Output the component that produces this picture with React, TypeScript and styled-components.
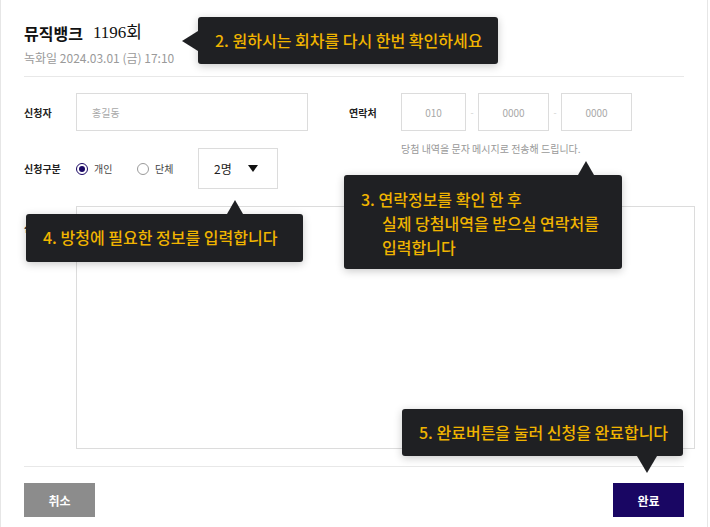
import styled, { createGlobalStyle, css } from "styled-components";

const GlobalStyle = createGlobalStyle`
  body {
    margin: 0;
    background: #fff;
    font-family: "Noto Sans CJK KR", "Noto Sans", sans-serif;
    color: #222;
  }
`;

const Modal = styled.div`
  position: relative;
  width: 708px;
  height: 527px;
  box-sizing: border-box;
  padding: 20px 23px 0;
  border-left: 1px solid #e6e6e6;
  border-right: 1px solid #e6e6e6;
  background: #fff;
`;

const Header = styled.div`
  padding-bottom: 9px;
  border-bottom: 1px solid #e8e8e8;
`;

const Title = styled.h1`
  margin: 0;
  display: flex;
  gap: 10px;
  font-size: 16px;
  line-height: 26px;
  font-weight: 700;
  color: #111;
`;

const Round = styled.span`
  font-family: "Liberation Serif", "Noto Sans CJK KR", serif;
  font-size: 17px;
  font-weight: 400;
`;

const SubTitle = styled.p`
  margin: 3px 0 0;
  font-size: 12px;
  line-height: 18px;
  color: #9a9a9a;
`;

const Form = styled.div`
  padding-top: 16px;
`;

const Columns = styled.div`
  display: grid;
  grid-template-columns: 325px 1fr;
`;

const Column = styled.div`
  display: flex;
  flex-direction: column;
  gap: 17px;
`;

const Field = styled.div<{ $h: number }>`
  display: flex;
  align-items: center;
  height: ${({ $h }) => $h}px;
`;

const Label = styled.span`
  width: 52px;
  flex: none;
  font-size: 10px;
  font-weight: 700;
  color: #222;
`;

const Input = styled.div<{ $w: number; $center?: boolean }>`
  box-sizing: border-box;
  width: ${({ $w }) => $w}px;
  height: 38px;
  border: 1px solid #dcdcdc;
  display: flex;
  align-items: center;
  justify-content: ${({ $center }) => ($center ? "center" : "flex-start")};
  padding-left: ${({ $center }) => ($center ? 0 : 15)}px;
  font-size: 10px;
  color: #a8a8a8;
`;

const Dash = styled.span`
  width: 12px;
  text-align: center;
  font-size: 9px;
  color: #d0d0d0;
`;

const Hint = styled.p`
  margin: -6px 0 0 52px;
  font-size: 10px;
  line-height: 14px;
  color: #999;
`;

const RadioOption = styled.label`
  width: 61px;
  display: flex;
  align-items: center;
  gap: 6px;
  font-size: 10px;
  color: #444;
`;

const RadioMark = styled.span<{ $on?: boolean }>`
  box-sizing: border-box;
  width: 12px;
  height: 12px;
  border-radius: 50%;
  display: inline-flex;
  align-items: center;
  justify-content: center;
  border: ${({ $on }) => ($on ? "1.5px solid #1a0764" : "1px solid #9a9a9a")};
  &::after {
    content: "";
    width: 6px;
    height: 6px;
    border-radius: 50%;
    background: ${({ $on }) => ($on ? "#1a0764" : "transparent")};
  }
`;

const Select = styled.div`
  box-sizing: border-box;
  width: 80px;
  height: 41px;
  border: 1px solid #dcdcdc;
  display: flex;
  align-items: center;
  justify-content: space-between;
  padding: 0 19px 0 15px;
  font-size: 12px;
  color: #222;
`;

const Caret = styled.span`
  width: 0;
  height: 0;
  border-left: 5px solid transparent;
  border-right: 5px solid transparent;
  border-top: 7px solid #111;
`;

const TextRow = styled.div`
  display: flex;
  align-items: flex-start;
  margin-top: 17px;
`;

const TextLabel = styled(Label)`
  padding-top: 14px;
`;

const TextArea = styled.div`
  box-sizing: border-box;
  width: 619px;
  height: 243px;
  border: 1px solid #dcdcdc;
  flex: none;
`;

const Footer = styled.div`
  margin-top: 17px;
  padding-top: 16px;
  border-top: 1px solid #e8e8e8;
  display: flex;
  justify-content: space-between;
`;

const Button = styled.button<{ $primary?: boolean }>`
  width: 71px;
  height: 34px;
  border: 0;
  padding: 0;
  font-family: inherit;
  font-size: 12px;
  font-weight: 700;
  color: #fff;
  background: ${({ $primary }) => ($primary ? "#190663" : "#8c8c8c")};
`;

type Side = "left" | "top" | "bottom";

const Tip = styled.div<{ $x: number; $y: number; $w: number; $h: number }>`
  position: absolute;
  left: ${({ $x }) => $x}px;
  top: ${({ $y }) => $y}px;
  width: ${({ $w }) => $w}px;
  height: ${({ $h }) => $h}px;
  box-sizing: border-box;
  padding: 12px 17px;
  background: #1f2023;
  border-radius: 3px;
  box-shadow: 0 2px 8px rgba(0, 0, 0, 0.22);
  color: #f0b400;
  font-size: 16px;
  font-weight: 500;
  line-height: 23px;
  white-space: nowrap;
  z-index: 2;
`;

const TipLine = styled.div<{ $indent?: number; $lh?: number }>`
  padding-left: ${({ $indent }) => $indent ?? 0}px;
  line-height: ${({ $lh }) => $lh ?? 23}px;
`;

const Arrow = styled.span<{ $side: Side; $at: number; $w: number; $h: number }>`
  position: absolute;
  width: 0;
  height: 0;
  border-style: solid;
  ${({ $side, $at, $w, $h }) =>
    $side === "left"
      ? css`
          left: -${$h}px;
          top: ${$at}px;
          border-width: ${$w / 2}px ${$h}px ${$w / 2}px 0;
          border-color: transparent #1f2023 transparent transparent;
        `
      : $side === "top"
      ? css`
          top: -${$h}px;
          left: ${$at}px;
          border-width: 0 ${$w / 2}px ${$h}px;
          border-color: transparent transparent #1f2023;
        `
      : css`
          bottom: -${$h}px;
          left: ${$at}px;
          border-width: ${$h}px ${$w / 2}px 0;
          border-color: #1f2023 transparent transparent;
        `}
`;

export default function App() {
  return (
    <>
      <GlobalStyle />
      <Modal>
        <Header>
          <Title>
            <span>뮤직뱅크</span>
            <Round>1196회</Round>
          </Title>
          <SubTitle>녹화일 2024.03.01 (금) 17:10</SubTitle>
        </Header>

        <Form>
          <Columns>
            <Column>
              <Field $h={38}>
                <Label>신청자</Label>
                <Input $w={232}>홍길동</Input>
              </Field>
              <Field $h={41}>
                <Label>신청구분</Label>
                <RadioOption>
                  <RadioMark $on />
                  개인
                </RadioOption>
                <RadioOption>
                  <RadioMark />
                  단체
                </RadioOption>
                <Select>
                  <span>2명</span>
                  <Caret />
                </Select>
              </Field>
            </Column>
            <Column>
              <Field $h={38}>
                <Label>연락처</Label>
                <Input $w={65} $center>010</Input>
                <Dash>-</Dash>
                <Input $w={71} $center>0000</Input>
                <Dash>-</Dash>
                <Input $w={71} $center>0000</Input>
              </Field>
              <Hint>당첨 내역을 문자 메시지로 전송해 드립니다.</Hint>
            </Column>
          </Columns>

          <TextRow>
            <TextLabel>신청사연</TextLabel>
            <TextArea />
          </TextRow>
        </Form>

        <Footer>
          <Button>취소</Button>
          <Button $primary>완료</Button>
        </Footer>

        <Tip $x={197} $y={17} $w={300} $h={47}>
          <Arrow $side="left" $at={14} $w={20} $h={16} />
          2. 원하시는 회차를 다시 한번 확인하세요
        </Tip>

        <Tip $x={343} $y={175} $w={278} $h={94}>
          <Arrow $side="top" $at={234} $w={17} $h={14} />
          <TipLine $lh={24}>3. 연락정보를 확인 한 후</TipLine>
          <TipLine $lh={24} $indent={21}>실제 당첨내역을 받으실 연락처를</TipLine>
          <TipLine $lh={24} $indent={21}>입력합니다</TipLine>
        </Tip>

        <Tip $x={25} $y={214} $w={277} $h={48}>
          <Arrow $side="top" $at={201} $w={16} $h={14} />
          4. 방청에 필요한 정보를 입력합니다
        </Tip>

        <Tip $x={401} $y={409} $w={281} $h={47}>
          <Arrow $side="bottom" $at={235} $w={21} $h={17} />
          5. 완료버튼을 눌러 신청을 완료합니다
        </Tip>
      </Modal>
    </>
  );
}
